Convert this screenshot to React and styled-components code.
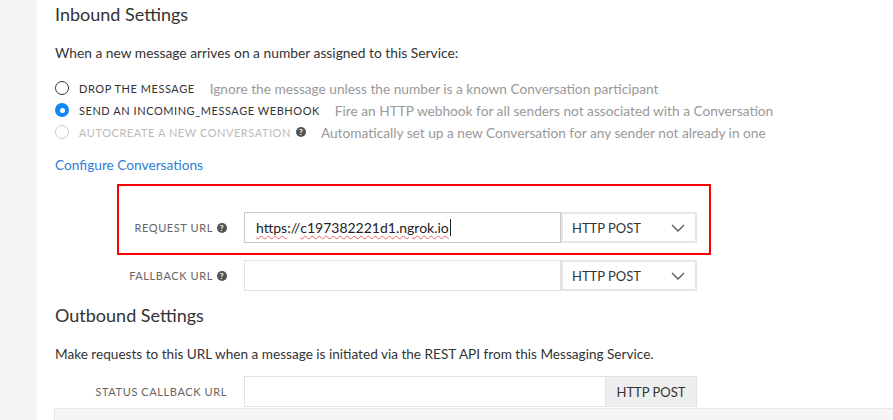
import React from "react";
import styled, { createGlobalStyle } from "styled-components";

const Global = createGlobalStyle`
  html, body { margin: 0; padding: 0; background: #fff; }
  body { font-family: Lato, "Open Sans", sans-serif; color: #333; }
  * { box-sizing: border-box; }
`;

const Page = styled.div`
  display: flex;
  width: 893px;
  height: 420px;
  overflow: hidden;
`;

const Sidebar = styled.div`
  width: 37px;
  flex: none;
  background: #f4f4f4;
`;

const Main = styled.div`
  flex: 1;
  padding-left: 18px;
  display: flex;
  flex-direction: column;
  & > * { flex-shrink: 0; }
`;

const Heading = styled.h2`
  margin: ${(p) => p.$top || 0}px 0 0;
  font-size: 18px;
  font-weight: 400;
  line-height: 22px;
  color: #333;
`;

const Text = styled.p`
  margin: ${(p) => p.$top || 0}px 0 0;
  font-size: ${(p) => p.$size || 13.8}px;
  line-height: 18px;
  color: #333;
`;

const RadioList = styled.div`
  margin-top: 17px;
  display: flex;
  flex-direction: column;
  gap: 4px;
`;

const RadioRow = styled.label`
  display: flex;
  align-items: center;
  height: 18px;
`;

const Radio = styled.span`
  width: 14px;
  height: 14px;
  border-radius: 50%;
  flex: none;
  margin-right: 10px;
  border: ${(p) =>
    p.$checked ? "none" : `1.5px solid ${p.$disabled ? "#ccc" : "#333"}`};
  background: ${(p) => (p.$checked ? "#1388f5" : "#fff")};
  display: flex;
  align-items: center;
  justify-content: center;
  &::after {
    content: "";
    display: ${(p) => (p.$checked ? "block" : "none")};
    width: 5px;
    height: 5px;
    border-radius: 50%;
    background: #fff;
  }
`;

const RadioLabel = styled.span`
  font-size: 11px;
  letter-spacing: 0.55px;
  text-transform: uppercase;
  color: ${(p) => (p.$disabled ? "#bbb" : "#333")};
  display: flex;
  align-items: center;
  gap: 5px;
`;

const RadioHint = styled.span`
  margin-left: 15px;
  font-size: 13.7px;
  color: #999;
`;

const Link = styled.a`
  margin-top: 15px;
  font-size: 13.7px;
  line-height: 18px;
  color: #2d80d6;
  text-decoration: none;
  align-self: flex-start;
`;

const Highlight = styled.div`
  margin: 10px 0 0 62px;
  width: 594px;
  border: 2px solid #f00;
  padding: 26px 0 10px;
`;

const Field = styled.div`
  display: flex;
  align-items: stretch;
  height: 31px;
  margin-top: ${(p) => p.$top || 0}px;
`;

const FieldLabel = styled.div`
  width: ${(p) => p.$w}px;
  flex: none;
  padding-right: 17px;
  display: flex;
  align-items: center;
  justify-content: flex-end;
  gap: 4px;
  font-size: 11px;
  letter-spacing: 0.6px;
  text-transform: uppercase;
  color: #666;
`;

const Input = styled.div`
  width: ${(p) => p.$w}px;
  flex: none;
  border: 1px solid ${(p) => (p.$focus ? "#c8c8c8" : "#e2e2e2")};
  background: #fff;
  display: flex;
  align-items: center;
  padding-left: 11px;
  font-size: 14px;
  color: #222;
`;

const Misspelled = styled.span`
  text-decoration: underline wavy rgba(230, 40, 40, 0.7);
  text-decoration-thickness: 1px;
  text-underline-offset: 2px;
`;

const Caret = styled.span`
  display: inline-block;
  width: 1px;
  height: 17px;
  background: #222;
  margin-left: 1px;
`;

const Select = styled.div`
  width: 136px;
  flex: none;
  border: 2px solid #e6e6e6;
  display: flex;
  align-items: center;
  justify-content: space-between;
  padding: 0 10px 0 9px;
  font-size: 13px;
  color: #333;
`;

const Addon = styled.div`
  width: 91px;
  flex: none;
  background: #eee;
  border: 1px solid #e2e2e2;
  border-left: none;
  display: flex;
  align-items: center;
  justify-content: center;
  font-size: 13px;
  color: #333;
`;

const BottomPanel = styled.div`
  margin-top: 1px;
  height: 20px;
  background: #f5f5f5;
  border-top: 1px solid #e6e6e6;
  border-left: 1px solid #e6e6e6;
  margin-left: -1px;
`;

const Help = () => (
  <svg width="10" height="10" viewBox="0 0 10 10">
    <circle cx="5" cy="5" r="5" fill="#555" />
    <text
      x="5"
      y="8.2"
      textAnchor="middle"
      fontSize="8"
      fontWeight="700"
      fontFamily="Lato, sans-serif"
      fill="#fff"
    >
      ?
    </text>
  </svg>
);

const Chevron = () => (
  <svg width="14" height="8" viewBox="0 0 14 8">
    <path d="M1 1l6 6 6-6" fill="none" stroke="#555" strokeWidth="1.3" />
  </svg>
);

const radios = [
  {
    label: "Drop the message",
    hint: "Ignore the message unless the number is a known Conversation participant",
  },
  {
    label: "Send an incoming_message webhook",
    hint: "Fire an HTTP webhook for all senders not associated with a Conversation",
    checked: true,
  },
  {
    label: "Autocreate a new conversation",
    hint: "Automatically set up a new Conversation for any sender not already in one",
    disabled: true,
    help: true,
  },
];

export default function App() {
  return (
    <Page>
      <Global />
      <Sidebar />
      <Main>
        <Heading $top={3}>Inbound Settings</Heading>
        <Text $top={19}>When a new message arrives on a number assigned to this Service:</Text>
        <RadioList>
          {radios.map((r) => (
            <RadioRow key={r.label}>
              <Radio $checked={r.checked} $disabled={r.disabled} />
              <RadioLabel $disabled={r.disabled}>
                {r.label}
                {r.help && <Help />}
              </RadioLabel>
              <RadioHint>{r.hint}</RadioHint>
            </RadioRow>
          ))}
        </RadioList>
        <Link href="#">Configure Conversations</Link>
        <Highlight>
          <Field>
            <FieldLabel $w={125}>
              Request URL <Help />
            </FieldLabel>
            <Input $w={317} $focus>
              <Misspelled>https</Misspelled>://<Misspelled>c197382221d1.ngrok.io</Misspelled>
              <Caret />
            </Input>
            <Select>
              HTTP POST <Chevron />
            </Select>
          </Field>
        </Highlight>
        <Field $top={5}>
          <FieldLabel $w={189}>
            Fallback URL <Help />
          </FieldLabel>
          <Input $w={317} />
          <Select>
            HTTP POST <Chevron />
          </Select>
        </Field>
        <Heading $top={13}>Outbound Settings</Heading>
        <Text $top={19} $size={13.6}>
          Make requests to this URL when a message is initiated via the REST API from this Messaging Service.
        </Text>
        <Field $top={13}>
          <FieldLabel $w={189}>Status Callback URL</FieldLabel>
          <Input $w={362} />
          <Addon>HTTP POST</Addon>
        </Field>
        <BottomPanel />
      </Main>
    </Page>
  );
}
